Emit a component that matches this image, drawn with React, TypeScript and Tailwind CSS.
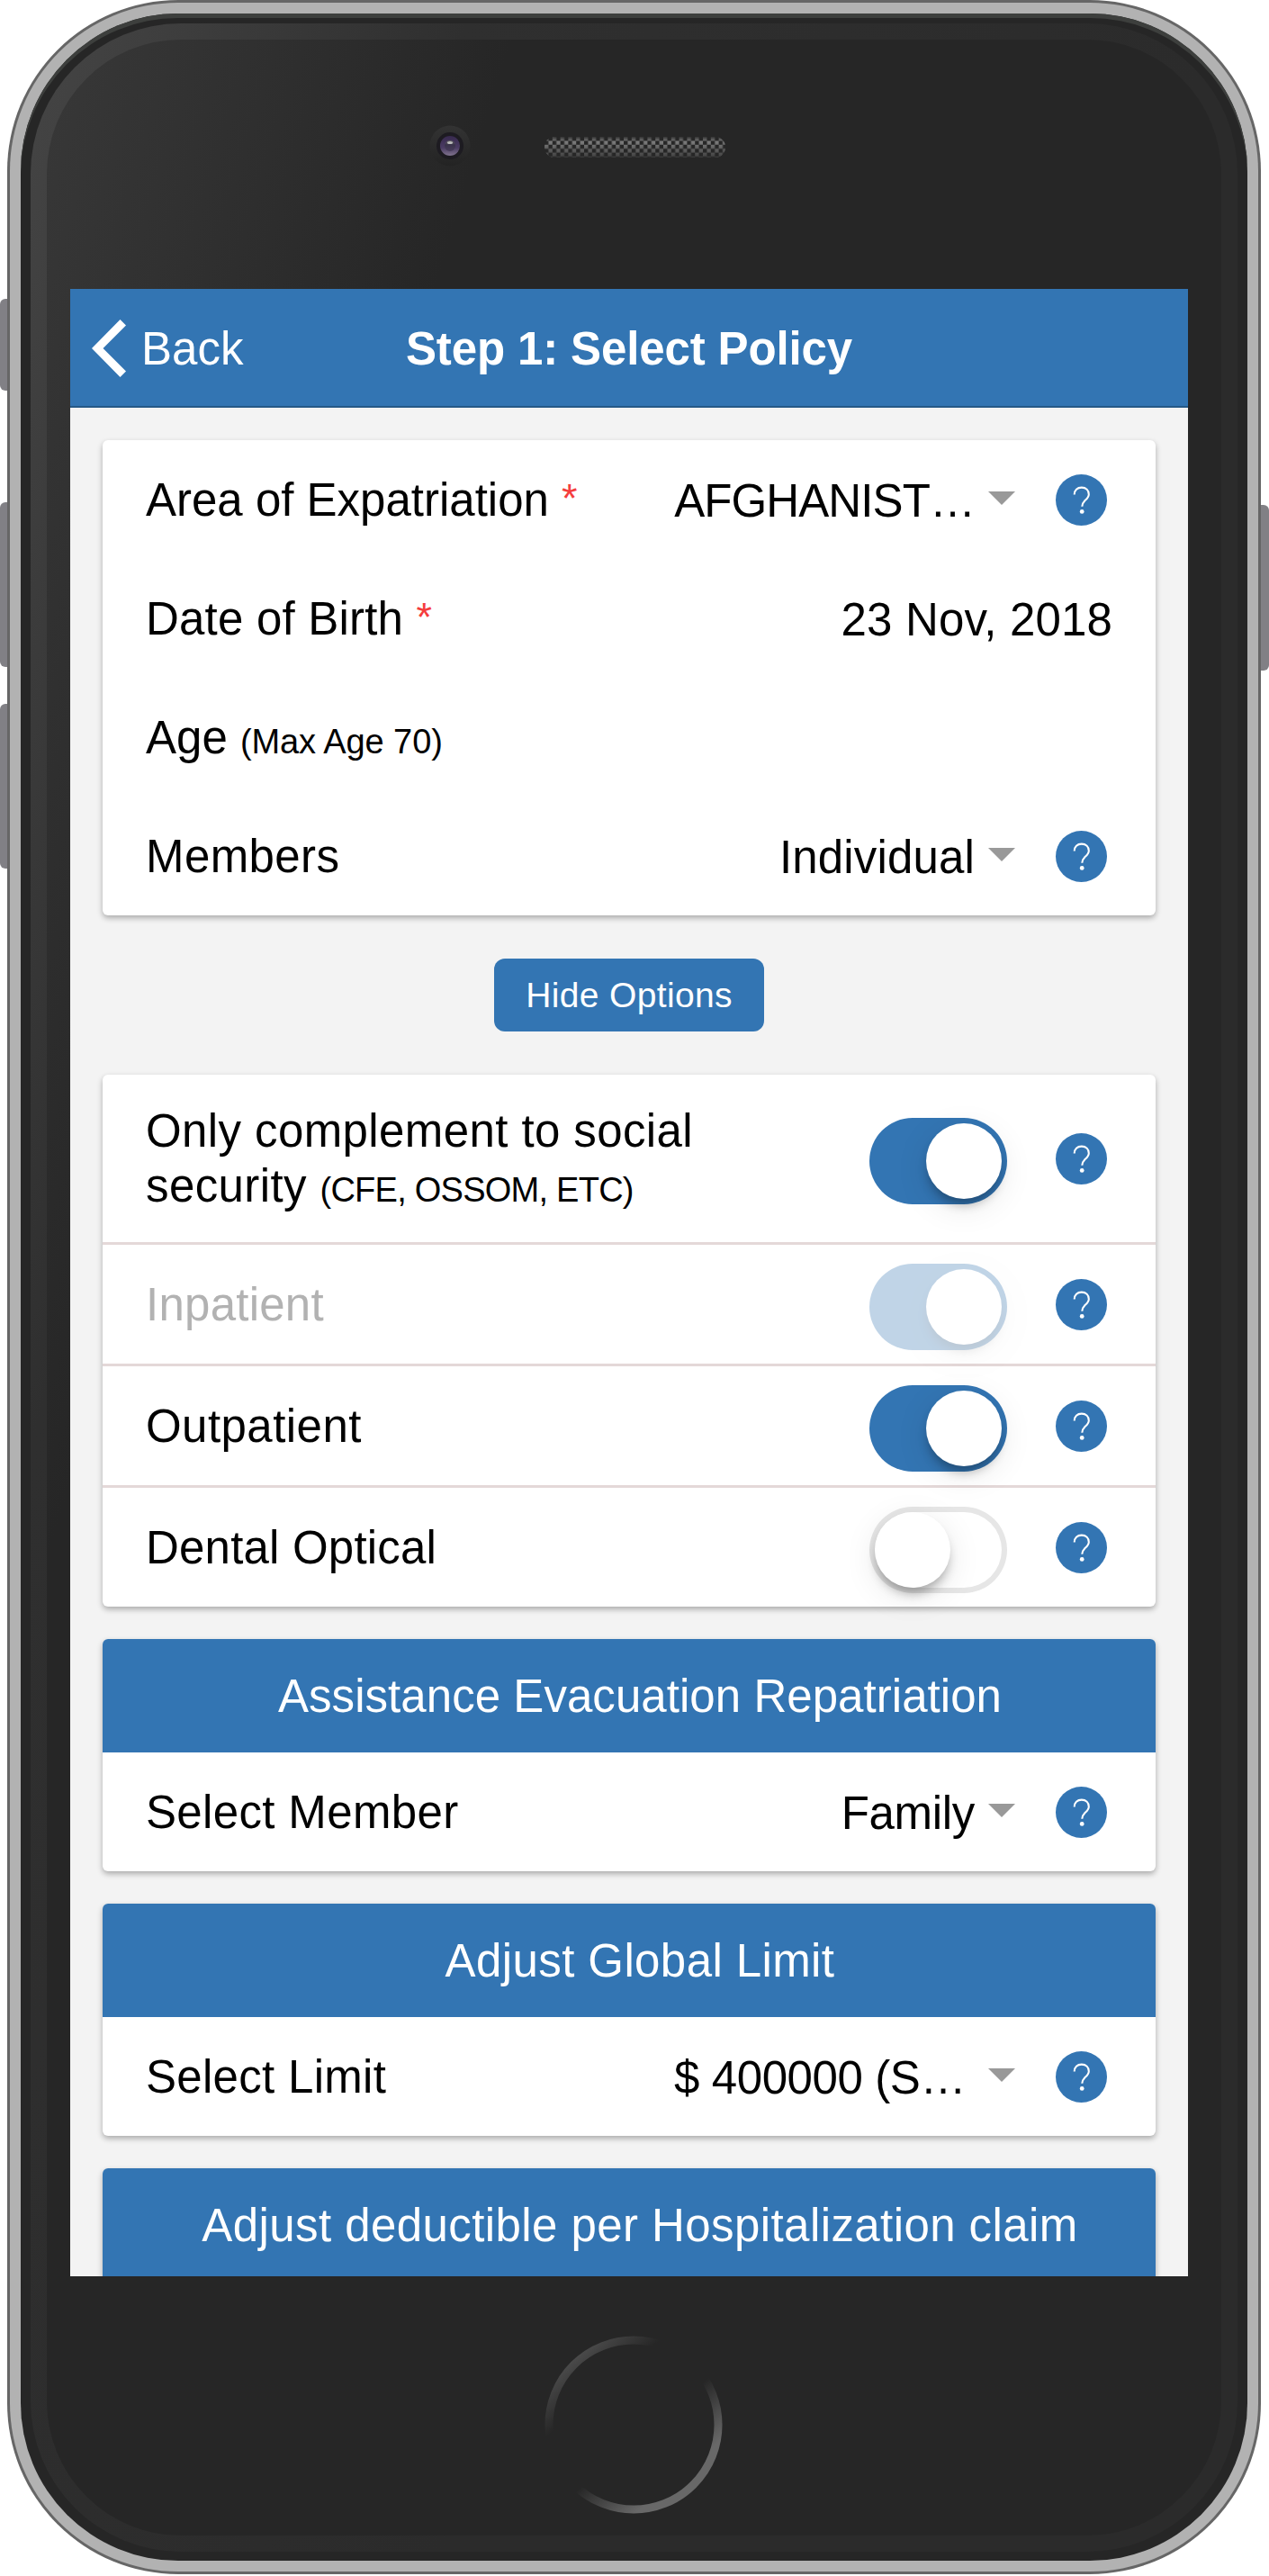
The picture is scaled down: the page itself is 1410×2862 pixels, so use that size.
import React from "react";

function Help() {
  return (
    <div className="ml-[45px] flex h-[57px] w-[57px] shrink-0 items-center justify-center rounded-full bg-[#3375b3]">
      <svg width="57" height="57" viewBox="0 0 57 57" fill="none">
        <path d="M20.700 22.500C20.700 17.500 24 14.600 28.800 14.600S36.800 17.600 36.800 22.200C36.800 25.500 34.500 27.300 32.200 29.500C30 31.700 29.300 33 29.300 35.700" stroke="#fff" strokeWidth="2.100" />
        <circle cx="29.200" cy="41.400" r="2.400" fill="#fff" />
      </svg>
    </div>
  );
}

function Caret() {
  return (
    <svg className="-mt-[3px] ml-[15px] shrink-0" width="30" height="15" viewBox="0 0 30 15">
      <path d="M0 0h30L15 15z" fill="#999" />
    </svg>
  );
}

function Toggle({ on, disabled }: { on: boolean; disabled?: boolean }) {
  return (
    <div className={"mr-[9px] mt-[6px] h-24 w-[153px] shrink-0 rounded-full p-1.5 " + (on ? "bg-[#3375b3] " : "bg-[#e6e6e6] ") + (disabled ? "opacity-30" : "")}>
      <div className={"flex h-full w-full rounded-full " + (on ? "justify-end" : "bg-white")}>
        <div className="h-[84px] w-[84px] rounded-full bg-white shadow-[0_9px_36px_rgba(0,0,0,0.1),0_9px_12px_-3px_rgba(0,0,0,0.3)]" />
      </div>
    </div>
  );
}

function Card({ children, className = "" }: { children: React.ReactNode; className?: string }) {
  return <div className={"shrink-0 rounded-[6px] bg-white shadow-[0_3px_6px_rgba(0,0,0,0.3)] " + className}>{children}</div>;
}

function Row({ label, children, className = "h-[132px]" }: { label: React.ReactNode; children?: React.ReactNode; className?: string }) {
  return (
    <div className={"flex items-center justify-between pl-[48px] pr-[54px] " + className}>
      <div className="whitespace-nowrap pt-px leading-[61px]">{label}</div>
      <div className="flex items-center whitespace-nowrap">{children}</div>
    </div>
  );
}

function Value({ children, className = "" }: { children: React.ReactNode; className?: string }) {
  return <span className={"pt-[3px] leading-[60px] " + className}>{children}</span>;
}

function CardTitle({ children, className = "" }: { children: React.ReactNode; className?: string }) {
  return (
    <div className={"flex h-[126px] items-center justify-center whitespace-nowrap rounded-t-[6px] bg-[#3375b3] pl-[24px] pt-[3px] text-white " + className}>
      {children}
    </div>
  );
}

const Star = () => <span className="inline-block align-top text-[45px] leading-[58px] tracking-normal text-[#f53d3d]">*</span>;

export default function App() {
  return (
    <div className="relative h-[2862px] w-[1410px] overflow-hidden bg-white font-['Liberation_Sans',Arial,sans-serif]">
      <div className="absolute left-0 top-[332px] h-[102px] w-6 rounded-[6px] bg-[#818085]" />
      <div className="absolute left-0 top-[558px] h-[183px] w-6 rounded-[6px] bg-[#818085]" />
      <div className="absolute left-0 top-[782px] h-[183px] w-6 rounded-[6px] bg-[#818085]" />
      <div className="absolute right-0 top-[561px] h-[184px] w-6 rounded-[6px] bg-[#818085]" />
      <div className="relative ml-2 h-[2860px] w-[1393px] rounded-[190px] bg-[#666] p-[3px]">
        <div className="h-full w-full rounded-[187px] bg-[#b2b2b2] p-3">
          <div className="h-full w-full rounded-[175px] bg-[#262626] px-[11px] pb-[10px] pt-[11px] shadow-[inset_0_5px_0_#3d3f3d]">
            <div className="h-full w-full rounded-[167px] bg-[linear-gradient(107deg,#454545_0%,#2f2f2f_22%,#2b2b2b_60%,#2b2b2b_100%)] p-[18px]">
              <div className="flex h-full w-full flex-col rounded-[149px] bg-[linear-gradient(107deg,#383838_0%,#262626_24%,#262626_100%)] px-[26px]">
                <div className="relative h-[277px] shrink-0">
                  <svg className="absolute left-[396px] top-[92px]" width="52" height="52" viewBox="0 0 52 52">
                    <defs>
                      <linearGradient id="rim" x1="0" y1="0" x2="0" y2="1"><stop stopColor="#333" /><stop offset="1" stopColor="#232323" /></linearGradient>
                      <linearGradient id="lens" x1="0" y1="0" x2="0" y2="1"><stop stopColor="#37294e" /><stop offset=".6" stopColor="#4b3c63" /><stop offset="1" stopColor="#80738e" /></linearGradient>
                      <linearGradient id="pupil" x1="0" y1="0" x2="0" y2="1"><stop stopColor="#666" /><stop offset=".4" stopColor="#39324a" /><stop offset="1" stopColor="#493d5c" /></linearGradient>
                    </defs>
                    <circle cx="26" cy="26" r="22.500" fill="url(#rim)" />
                    <circle cx="26" cy="26" r="15" fill="#1d1b21" />
                    <circle cx="26" cy="26" r="11" fill="url(#lens)" />
                    <circle cx="26" cy="26" r="6" fill="url(#pupil)" />
                    <ellipse cx="26" cy="22.500" rx="3" ry="1.500" fill="#bbb" />
                  </svg>
                  <svg className="absolute left-[527px] top-[108px]" width="202" height="24" viewBox="0 0 202 24">
                    <defs>
                      <pattern id="mesh" width="8.800" height="8.800" patternUnits="userSpaceOnUse">
                        <path d="M0 0h4.400v4.400H0zM4.400 4.400h4.400v4.400H4.400z" fill="#7c7c7c" />
                      </pattern>
                      <linearGradient id="meshFade" x1="0" y1="0" x2="0" y2="1"><stop stopColor="#262626" stopOpacity=".85" /><stop offset=".22" stopColor="#262626" stopOpacity="0" /><stop offset="1" stopColor="#262626" stopOpacity=".7" /></linearGradient>
                    </defs>
                    <rect width="201" height="23" rx="11.500" fill="url(#mesh)" />
                    <rect width="201" height="23" rx="11.500" fill="url(#meshFade)" />
                  </svg>
                </div>
                <div className="flex h-[2208px] w-[1242px] shrink-0 flex-col overflow-hidden bg-[#f3f3f3] text-[51px] text-black">
                  <header className="relative flex h-[132px] shrink-0 items-center justify-center border-b-2 border-[#265987] bg-[#3375b3] text-white">
                    <div className="absolute left-[24px] top-0 flex h-full items-center">
                      <svg className="mt-px" width="38" height="64" viewBox="0 0 38 64"><path d="M31.500 0L0 32l31.500 32 6.500-6.500L12.500 32 38 6.500z" fill="#fff" /></svg>
                      <span className="ml-[17px] pt-[4px]">Back</span>
                    </div>
                    <h1 className="pt-[4px] font-bold tracking-[-0.13px]">Step 1: Select Policy</h1>
                  </header>
                  <main className="flex flex-1 flex-col px-[36px] pt-[36px]">
                    <Card>
                      <Row label={<>Area of Expatriation <Star /></>}><Value className="tracking-[-0.9px]">AFGHANIST…</Value><Caret /><Help /></Row>
                      <Row label={<span className="tracking-[0.2px]">Date of Birth <Star /></span>}><Value className="-mr-[6px] tracking-[0.15px]">23 Nov, 2018</Value></Row>
                      <Row label={<div className="pt-[4px]">Age <span className="text-[38px] tracking-[-0.1px]">(Max Age 70)</span></div>} />
                      <Row label={<span className="tracking-[0.4px]">Members</span>}><Value className="tracking-[0.15px]">Individual</Value><Caret /><Help /></Row>
                    </Card>
                    <button className="mb-[48px] mt-[48px] h-[81px] w-[300px] shrink-0 self-center rounded-[12px] bg-[#3375b3] pt-px text-[39px] tracking-[0.35px] text-white">Hide Options</button>
                    <Card>
                      <Row
                        className="h-[189px] border-b-[3px] border-[#e4d8d8]"
                        label={<div className="pt-[4px] tracking-[0.4px]">Only complement to social<br />security <span className="text-[38px] tracking-[-0.75px]">(CFE, OSSOM, ETC)</span></div>}
                      >
                        <Toggle on /><Help />
                      </Row>
                      <Row className="h-[135px] border-b-[3px] border-[#e4d8d8]" label={<span className="tracking-[0.25px] text-[#b2b2b2]">Inpatient</span>}><Toggle on disabled /><Help /></Row>
                      <Row className="h-[135px] border-b-[3px] border-[#e4d8d8]" label={<span className="tracking-[0.45px]">Outpatient</span>}><Toggle on /><Help /></Row>
                      <Row label={<span className="tracking-[0.2px]">Dental Optical</span>}><Toggle on={false} /><Help /></Row>
                    </Card>
                    <Card className="mt-9">
                      <CardTitle className="tracking-[0.05px]">Assistance Evacuation Repatriation</CardTitle>
                      <Row label={<span className="tracking-[0.35px]">Select Member</span>}><Value className="tracking-[-0.3px]">Family</Value><Caret /><Help /></Row>
                    </Card>
                    <Card className="mt-9">
                      <CardTitle className="tracking-[0.4px]">Adjust Global Limit</CardTitle>
                      <Row label={<span className="tracking-[0.3px]">Select Limit</span>}><Value className="w-[334px] tracking-[-0.4px]">$ 400000 (S…</Value><Caret /><Help /></Row>
                    </Card>
                    <Card className="mt-9">
                      <CardTitle className="tracking-[0.42px]">Adjust deductible per Hospitalization claim</CardTitle>
                    </Card>
                  </main>
                </div>
                <div className="relative h-[287px] shrink-0">
                  <svg className="absolute left-[527px] top-[66px]" width="198" height="198" viewBox="0 0 198 198" fill="none">
                    <defs>
                      <linearGradient id="ring" gradientUnits="userSpaceOnUse" x1="0" y1="0" x2="182" y2="213">
                        <stop offset=".12" stopColor="#505050" />
                        <stop offset=".31" stopColor="#262626" />
                        <stop offset=".55" stopColor="#262626" />
                        <stop offset=".77" stopColor="#686868" />
                        <stop offset="1" stopColor="#686868" />
                      </linearGradient>
                    </defs>
                    <circle cx="99" cy="99" r="94" stroke="url(#ring)" strokeWidth="9" />
                  </svg>
                </div>
              </div>
            </div>
          </div>
        </div>
      </div>
    </div>
  );
}
